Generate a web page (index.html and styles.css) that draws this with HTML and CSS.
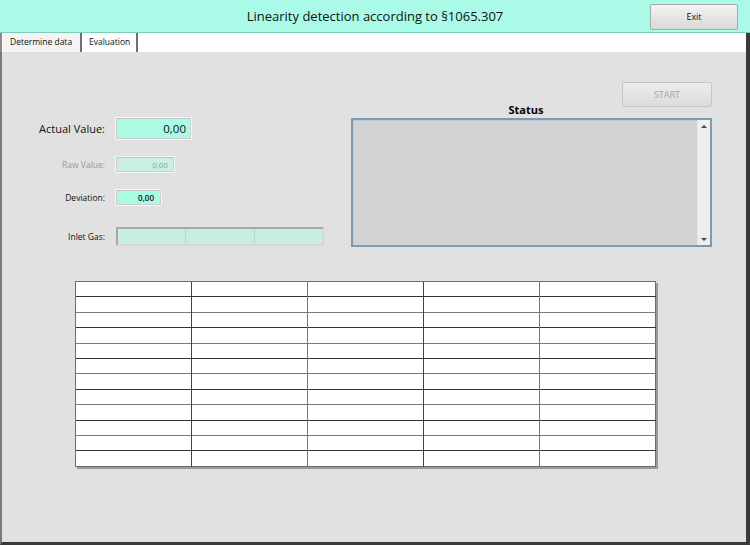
FILE: index.html
```html
<!DOCTYPE html>
<html>
<head>
<meta charset="utf-8">
<link rel="stylesheet" href="styles.css">
</head>
<body>
<div class="app">
  <header class="header">
    <div class="header-spacer"></div>
    <h1 class="title">Linearity detection according to §1065.307</h1>
    <div class="header-actions"><button class="btn btn-exit">Exit</button></div>
  </header>
  <nav class="tabs">
    <div class="tab tab-active">Determine data</div>
    <div class="tab">Evaluation</div>
  </nav>
  <main class="panel">
    <section class="top">
      <div class="form">
        <div class="row row-actual">
          <label class="lbl lbl-big">Actual Value:</label>
          <div class="field field-big">0,00</div>
        </div>
        <div class="row row-raw">
          <label class="lbl lbl-disabled">Raw Value:</label>
          <div class="field field-raw">0,00</div>
        </div>
        <div class="row row-dev">
          <label class="lbl">Deviation:</label>
          <div class="field field-dev">0,00</div>
        </div>
        <div class="row row-gas">
          <label class="lbl">Inlet Gas:</label>
          <div class="gas">
            <div class="gas-seg"></div>
            <div class="gas-seg"></div>
            <div class="gas-seg"></div>
          </div>
        </div>
      </div>
      <div class="status">
        <button class="btn btn-start" disabled>START</button>
        <div class="status-title">Status</div>
        <div class="status-box">
          <div class="status-text"></div>
          <div class="scrollbar">
            <span class="arrow arrow-up"></span>
            <span class="arrow arrow-down"></span>
          </div>
        </div>
      </div>
    </section>
    <div class="grid-wrap">
      <table class="grid">
        <tbody>
          <tr><td></td><td></td><td></td><td></td><td></td></tr>
          <tr><td></td><td></td><td></td><td></td><td></td></tr>
          <tr><td></td><td></td><td></td><td></td><td></td></tr>
          <tr><td></td><td></td><td></td><td></td><td></td></tr>
          <tr><td></td><td></td><td></td><td></td><td></td></tr>
          <tr><td></td><td></td><td></td><td></td><td></td></tr>
          <tr><td></td><td></td><td></td><td></td><td></td></tr>
          <tr><td></td><td></td><td></td><td></td><td></td></tr>
          <tr><td></td><td></td><td></td><td></td><td></td></tr>
          <tr><td></td><td></td><td></td><td></td><td></td></tr>
          <tr><td></td><td></td><td></td><td></td><td></td></tr>
          <tr><td></td><td></td><td></td><td></td><td></td></tr>
        </tbody>
      </table>
    </div>
  </main>
</div>
</body>
</html>
```
FILE: styles.css
```css
* { box-sizing: border-box; }
html, body { margin: 0; padding: 0; }
body {
  width: 750px;
  height: 545px;
  overflow: hidden;
  background: #ffffff;
  font-family: "Open Sans", "Noto Sans", sans-serif;
  color: #000;
}
.app {
  width: 750px;
  height: 545px;
  display: flex;
  flex-direction: column;
}
.header {
  height: 33px;
  background: #a9fbe7;
  border-bottom: 1px solid #7fcdb8;
  display: grid;
  grid-template-columns: 1fr auto 1fr;
  align-items: center;
}
.title {
  margin: 0;
  font-size: 13px;
  font-weight: normal;
  color: #111;
  padding-bottom: 1px;
}
.header-actions {
  display: flex;
  justify-content: flex-end;
  padding-right: 12px;
}
.btn {
  font-family: "Open Sans", "Noto Sans", sans-serif;
  font-size: 9px;
  border: 1px solid #a9a9a9;
  border-radius: 2px;
  background: linear-gradient(#f3f3f3, #e6e6e6 50%, #d9d9d9);
  color: #111;
  padding: 0;
}
.btn-exit {
  width: 88px;
  height: 26px;
  margin-top: 1px;
}
.tabs {
  height: 19px;
  background: #ffffff;
  display: flex;
  border-left: 2px solid #8a8a8a;
  border-right: 4px solid #3a3a3a;
  padding-left: 1px;
}
.tab {
  font-size: 8.5px;
  padding: 3px 6px 0 7px;
  border-right: 2px solid #707070;
  background: #ffffff;
  color: #111;
}
.tab-active {
  width: 79px;
  background: #f4f4f4;
}
.panel {
  flex: 1;
  background: #e1e1e1;
  border-left: 2px solid #7a7a7a;
  border-right: 4px solid #3a3a3a;
  border-bottom: 3px solid #3a3a3a;
  display: flex;
  flex-direction: column;
}
.top {
  display: flex;
  align-items: flex-start;
  height: 196px;
}
.form {
  display: flex;
  flex-direction: column;
  margin-top: 66px;
  width: 349px;
}
.row {
  display: flex;
  align-items: center;
  gap: 11px;
}
.row-raw, .row-dev { margin-top: 18px; }
.row-gas { margin-top: 22px; }
.lbl {
  width: 103px;
  text-align: right;
  font-size: 8.5px;
  color: #111;
}
.lbl-big { font-size: 11px; }
.lbl-disabled { color: #9a9a9a; }
.field {
  text-align: right;
  border: 1px solid #cfcfcf;
  border-top-color: #c4c4c4;
  box-shadow: 0 0 0 1px #f4f4f4;
  background: #a9fbe3;
  color: #111;
}
.field-big {
  width: 75px;
  height: 21px;
  font-size: 11.5px;
  padding: 2px 4px 0 0;
}
.field-raw {
  width: 58px;
  height: 15px;
  font-size: 8px;
  background: #c9eee2;
  color: #9a9a9a;
  padding: 1px 5px 0 0;
}
.field-dev {
  width: 45px;
  height: 15px;
  font-size: 8px;
  font-weight: 600;
  padding: 1px 6px 0 0;
}
.gas {
  width: 208px;
  height: 19px;
  display: flex;
  border: 2px solid #a8a8a8;
  border-right-color: #d6d6d6;
  border-bottom-color: #d6d6d6;
  background: #c6ede1;
}
.gas-seg {
  flex: 1;
  border-right: 1px solid #b3dccf;
}
.gas-seg:last-child { border-right: none; }
.status {
  width: 361px;
  display: flex;
  flex-direction: column;
  margin-top: 30px;
}
.btn-start {
  align-self: flex-end;
  width: 90px;
  height: 25px;
  color: #a3a3a3;
  border-color: #c6c6c6;
  background: linear-gradient(#ececec, #e4e4e4 50%, #dcdcdc);
}
.status-title {
  text-align: center;
  font-size: 11px;
  font-weight: bold;
  line-height: 11px;
  margin-top: -3px;
  margin-bottom: 3px;
  padding-right: 11px;
}
.status-box {
  height: 129px;
  border: 2px solid #7d9ab3;
  display: flex;
  background: #d3d3d3;
}
.status-text {
  flex: 1;
  border-left: 1px solid #a9d6e6;
  border-top: 1px solid #b6c9d6;
}
.scrollbar {
  width: 13px;
  background: #eeeeee;
  border-left: 1px solid #e6e6e6;
  display: flex;
  flex-direction: column;
  justify-content: space-between;
  align-items: center;
  padding: 5px 0 4px;
}
.arrow {
  width: 0;
  height: 0;
  border-left: 3px solid transparent;
  border-right: 3px solid transparent;
}
.arrow-up { border-bottom: 3px solid #444; }
.arrow-down { border-top: 3px solid #444; }
.grid-wrap {
  margin-top: 33px;
  margin-left: 73px;
}
.grid {
  border-collapse: collapse;
  table-layout: fixed;
  width: 581px;
  background: #fff;
  border: 1px solid #6c6c6c;
  box-shadow: 2px 2px 0 #9a9a9a;
}
.grid td {
  height: 15.4px;
  padding: 0;
  border-top: 1px solid #333;
  border-left: 1px solid #444;
}
.grid tr:nth-child(odd) td { border-top-color: #7a7a7a; }
.grid tr:first-child td { border-top-color: #6c6c6c; }
.grid td:nth-child(odd) { border-left-color: #777; }
.grid td:first-child { border-left-color: #6c6c6c; }
```
